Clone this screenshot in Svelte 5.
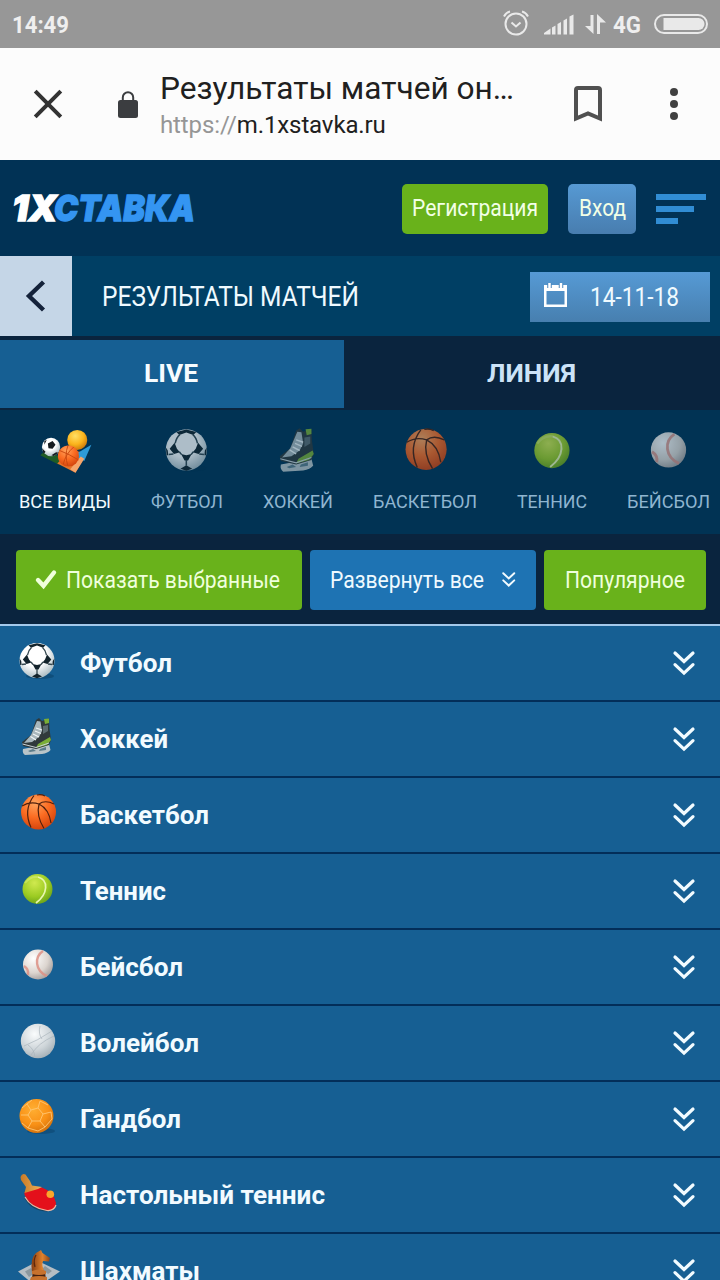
<script>
    const sports = [
        { id: 'all', label: 'ВСЕ ВИДЫ', width: 92 },
        { id: 'football', label: 'ФУТБОЛ', width: 72 },
        { id: 'hockey', label: 'ХОККЕЙ', width: 70 },
        { id: 'basketball', label: 'БАСКЕТБОЛ', width: 104 },
        { id: 'tennis', label: 'ТЕННИС', width: 70 },
        { id: 'baseball', label: 'БЕЙСБОЛ', width: 83 }
    ];

    const rows = [
        { id: 'football', label: 'Футбол', width: 92 },
        { id: 'hockey', label: 'Хоккей', width: 88 },
        { id: 'basketball', label: 'Баскетбол', width: 129 },
        { id: 'tennis', label: 'Теннис', width: 86 },
        { id: 'baseball', label: 'Бейсбол', width: 103 },
        { id: 'volleyball', label: 'Волейбол', width: 119 },
        { id: 'handball', label: 'Гандбол', width: 101 },
        { id: 'pingpong', label: 'Настольный теннис', width: 245 },
        { id: 'chess', label: 'Шахматы', width: 120 }
    ];

    let activeSport = $state('all');
    let activeTab = $state('live');
</script>

<!-- condensed label, squeezed to a given width -->
{#snippet label(text, size, width, weight = 400)}
    <svg class="label" width={width} height={size * 1.2}>
        <text x="0" y={size * 0.955} font-size={size} font-weight={weight} textLength={width} lengthAdjust="spacingAndGlyphs">{text}</text>
    </svg>
{/snippet}

{#snippet chevrons(size)}
    <svg width={size} height={size * 1.1} viewBox="0 0 22 24.2" fill="none" stroke="#f2fbff" stroke-width="3.2" stroke-linecap="round">
        <path d="M2 2 L11 10.5 L20 2 M2 13.6 L11 22.1 L20 13.6" />
    </svg>
{/snippet}

{#snippet sportIcon(id, size)}
    <svg class="sport-icon" width={size} height={size} viewBox="0 0 40 40">
        {#if id === 'all'}
            <path d="M-1.5 24 L5 18 L20 30 L14 32 Z" fill="#1f5c25" />
            <path d="M13 31 L24 20 L38 22 L28.5 39 Z" fill="#e5742a" />
            <path d="M27 24 L42 15 L36 29 Z" fill="#2e9bd8" />
            <path d="M28.5 39 L36 27 L33 25 L24 36 Z" fill="#f6a56a" />
            <circle cx="7.7" cy="17" r="7.8" fill="url(#white-ball)" />
            <path d="M5 14 L9 12 L11.5 15 L9 18.5 L5.5 18 Z M0 18 L3 21 L1.5 23 Z M8 24 L12 21.5 L14 22 L10 24.6 Z M2 12 L4 11 L2 15 Z" fill="#161c20" />
            <circle cx="30" cy="11" r="8.5" fill="url(#yellow-ball)" />
            <circle cx="22.5" cy="24.7" r="9" fill="url(#orange-ball)" />
            <path d="M15 20 Q23 23 31 28 M22 16 Q19 24 22 33 M27 17 Q20 23 18 32" fill="none" stroke="#c9480f" stroke-width=".8" />
        {:else if id === 'football'}
            <ellipse cx="22" cy="35" rx="14" ry="3" fill="#04304f" opacity=".35" />
            <circle cx="19" cy="19.5" r="17.5" fill="url(#white-ball)" />
            <path d="M9 13.5 L11 18.5 L13.5 21.5 L8.5 23 L4.8 18.5 Z M29 13.5 L27 18.5 L24.5 21.5 L29.5 23 L33.3 18.5 Z M14.5 23 L19 24 L23.5 23 L20.5 28.5 L17.5 28.5 Z M10.5 4.2 L19 2.2 L27.5 4.2 L25 6.8 L19 4.6 L13 6.8 Z M1.6 17.5 L3.2 20 L3.6 24 L2.2 24 Z M36.4 17.5 L34.8 20 L34.4 24 L35.8 24 Z M14 35.5 L19 32.5 L24 35.5 L19 37.2 Z" fill="#13232b" />
            <path d="M9.5 14 Q10.5 9 13.5 6.5 M28.5 14 Q27.5 9 24.5 6.5 M13 21 L15 23.5 M25 21 L23 23.5 M19 28 V33 M8 23 L4 23.5 M30 23 L34 23.5" fill="none" stroke="#34474f" stroke-width="1.3" />
        {:else if id === 'hockey'}
            <path d="M5 32 L31 27 L32.5 33 Q30 36 24 37 L7 38 Q4 36 5 32 Z" fill="#b9c4c8" />
            <path d="M10 34 L15 32 L18 34 L12 35 Z M22 32 L28 30 L28 33 L21 34 Z" fill="#5b7c8a" />
            <path d="M18 3 L21 1 L24 4 L31 1.5 L31.5 12 L33 23 L31 28 L18 32 L5 29 L4 25 L13 18 Z" fill="#30393b" />
            <path d="M19 4 L22.5 4.5 L24 14 L21 20 L14 25 L6 26 L13 18 Z" fill="#a9b7bc" />
            <path d="M26 2 L31 1.5 L31 6 L27 7 Z M32 20 L33 23 L29 28 L18 31 L20 27 Z" fill="#7aae36" />
            <path d="M18 11 L24 13 M17 14 L23 16.5 M15 17 L21 20 M12.5 19.5 L18 23" stroke="#f0f5f6" stroke-width="1.2" />
            <path d="M25 9 L30 8 L30 14 L25 17 Z" fill="#5d6c70" />
            <path d="M4.5 27 L18 30.5 L31 26" fill="none" stroke="#c9d2d5" stroke-width="1" />
        {:else if id === 'basketball'}
            <circle cx="20.5" cy="19" r="17.5" fill="url(#orange-ball)" />
            <path d="M4 13 Q12 8 21 11 Q31 16 33 30 M16 2.5 Q5 17 13 34.5 M21 11 Q18 23 26 35.5 M21 11 Q27 6.5 36 11 M19 2 Q23 1 27 3" fill="none" stroke="#50200d" stroke-width="1.2" />
        {:else if id === 'tennis'}
            <circle cx="19.5" cy="20" r="15" fill="url(#green-ball)" />
            <path d="M20 8 C31 11 30 25 18 34" fill="none" stroke="#e8f6b0" stroke-width="1.7" />
            <path d="M7 14 Q12 7 20 8" fill="none" stroke="#d4ec75" stroke-width="2" opacity=".6" />
        {:else if id === 'baseball'}
            <circle cx="20" cy="19.5" r="15" fill="url(#base-ball)" />
            <path d="M25 6 C16 12 17 26 29 31 M6 21 Q11 24 10 30" fill="none" stroke="#dc8f84" stroke-width="2.4" opacity=".85" />
        {:else if id === 'volleyball'}
            <circle cx="20" cy="20" r="17.2" fill="url(#volley-ball)" />
            <path d="M6 25 Q19 20 34 10 M13 34 Q20 22 36 15 M22 5 Q20 13 24 18 M10 24 Q16 28 17 36" fill="none" stroke="#aab5bb" stroke-width=".7" />
        {:else if id === 'handball'}
            <ellipse cx="23" cy="34" rx="14" ry="3" fill="#04304f" opacity=".3" />
            <circle cx="18.5" cy="19" r="17" fill="url(#hand-ball)" />
            <path d="M13 13 L20 11 L25 17 L22 24 L14 24 L10 18 Z M13 13 L9 7 M20 11 L22 4 M25 17 L33 15 M22 24 L27 30 M14 24 L10 31 M10 18 L3 18 M9 7 L14 3 M9 7 L4 11 M22 4 L30 8 M33 15 L34 22 L27 30 L20 34 L10 31 L4 26" fill="none" stroke="#ffc673" stroke-width=".9" />
        {:else if id === 'pingpong'}
            <path d="M6 24 Q12 38 30 38.5 L20 31 Z" fill="#163a50" opacity=".7" />
            <path d="M6.5 19 Q9 15 24 14.5 Q36 19 38 30 Q38 37 29 37.5 Q13 35 6.5 22 Z" fill="#e4101b" />
            <path d="M7 24 Q13 35 29 37.5 Q36 38 38 32" fill="none" stroke="#f2b8a0" stroke-width="1.2" />
            <path d="M2.5 4 Q4 0 7.5 1.5 L12 8 L14 12.5 L24 14 L20 16 L6.5 20 L8 14 L3 7 Z" fill="url(#wood)" />
            <circle cx="32.3" cy="21.2" r="3.8" fill="#fba62b" />
        {:else if id === 'chess'}
            <path d="M0 22.5 L20 12 L42 22.5 L24 35 L15 35 Z" fill="#b5bdc3" />
            <path d="M7 22.5 L13 19 L17 24 L11 28 Z M27 17 L34 22 L30 25 L24 20 Z" fill="#8b979e" />
            <path d="M14 23 Q12 9 18 4 L23 1 L24.5 4 L32 9 L31 12.5 L25 12 Q23 17 27 23 Z" fill="url(#knight)" />
            <path d="M15 23 H27 L29 40 H12 Z" fill="#46210f" />
            <path d="M14 22 Q21 19 28 22 V25 Q21 27 14 25 Z M13 28 Q21 26 29 28 L29 31 H12 Z" fill="#c7722e" />
            <path d="M18 6 Q15 11 17 18" fill="none" stroke="#5e280d" stroke-width="1.3" />
        {/if}
    </svg>
{/snippet}

<div class="screen">
    <div class="status">
        {@render label('14:49', 24, 57, 700)}
        <div class="status-icons">
            <svg class="alarm" width="26" height="26" viewBox="0 0 26 26" fill="none" stroke="#e9e9e9" stroke-width="2">
                <circle cx="13" cy="14" r="10.5" />
                <path d="M8.5 12.5 L13 16.5 L17.5 12.5 M1 6.5 Q3 2.5 7 1.5 M25 6.5 Q23 2.5 19 1.5" />
            </svg>
            <svg class="signal" width="30" height="21" viewBox="0 0 30 21" fill="#e9e9e9">
                <path d="M0 20.5 V19 L6.5 14.5 V20.5 Z M8 13.5 L11.5 11.5 V20.5 H8 Z M13.5 10 L17 8 V20.5 H13.5 Z M19.5 6.5 L23 4.5 V20.5 H19.5 Z M25.5 2.5 L29.5 .5 V20.5 H25.5 Z" />
            </svg>
            <svg class="data" width="21" height="21" viewBox="0 0 21 21" fill="#e9e9e9">
                <path d="M5.5 1 H8.5 V20 L0 12 H5.5 Z M12 20 V0 L21 8.5 H15 V20 Z" />
            </svg>
            {@render label('4G', 24, 28, 700)}
            <svg class="battery" width="54" height="20" viewBox="0 0 54 20">
                <rect x="1" y="1" width="52" height="18" rx="9" fill="none" stroke="#e9e9e9" stroke-width="2" />
                <path d="M9.5 4 H44.5 A6 6 0 0 1 44.5 16 H9.5 Z" fill="#e9e9e9" />
            </svg>
        </div>
    </div>

    <div class="browser">
        <svg class="close" width="28" height="28" viewBox="0 0 28 28" stroke="#333" stroke-width="4">
            <path d="M1.2 1.2 L26.8 26.8 M26.8 1.2 L1.2 26.8" />
        </svg>
        <svg class="lock" width="20" height="27" viewBox="0 0 20 27">
            <path d="M4.8 10 V6.5 A5.2 5.2 0 0 1 15.2 6.5 V10" fill="none" stroke="#3b3d40" stroke-width="2" />
            <rect y="9" width="20" height="18" rx="2.5" fill="#3b3d40" />
        </svg>
        <div class="address">
            {@render label('Результаты матчей он…', 32, 354)}
            <div class="url"><span>https://</span>m.1xstavka.ru</div>
        </div>
        <svg class="bookmark" width="28" height="36" viewBox="0 0 28 36">
            <path d="M2 32.5 V4 Q2 2 4 2 H24 Q26 2 26 4 V32.5 L14 27.5 Z" fill="none" stroke="#505050" stroke-width="4" />
        </svg>
        <svg class="dots" width="8" height="34" viewBox="0 0 8 34" fill="#404040">
            <circle cx="4" cy="5" r="4" />
            <circle cx="4" cy="17" r="4" />
            <circle cx="4" cy="29" r="4" />
        </svg>
    </div>

    <header>
        <svg class="logo" width="184" height="30" viewBox="0 0 184 30">
            <defs>
                <radialGradient id="white-ball" cx=".42" cy=".32" r=".7">
                    <stop offset=".5" stop-color="#fff" /><stop offset="1" stop-color="#a9bac1" />
                </radialGradient>
                <radialGradient id="yellow-ball" cx=".4" cy=".3" r=".7">
                    <stop offset="0" stop-color="#ffdf65" /><stop offset=".6" stop-color="#fbb41c" /><stop offset="1" stop-color="#cf7d0d" />
                </radialGradient>
                <radialGradient id="orange-ball" cx=".4" cy=".25" r=".8">
                    <stop offset="0" stop-color="#ffa35c" /><stop offset=".5" stop-color="#fb6c22" /><stop offset="1" stop-color="#d0400b" />
                </radialGradient>
                <radialGradient id="green-ball" cx=".4" cy=".3" r=".75">
                    <stop offset="0" stop-color="#d0e94f" /><stop offset=".6" stop-color="#9ccb22" /><stop offset="1" stop-color="#68a018" />
                </radialGradient>
                <radialGradient id="base-ball" cx=".35" cy=".3" r=".8">
                    <stop offset="0" stop-color="#fff" /><stop offset=".6" stop-color="#dcd5cf" /><stop offset="1" stop-color="#9c9696" />
                </radialGradient>
                <radialGradient id="volley-ball" cx=".4" cy=".3" r=".75">
                    <stop offset="0" stop-color="#fafcfd" /><stop offset=".6" stop-color="#ced5d9" /><stop offset="1" stop-color="#a2adb4" />
                </radialGradient>
                <radialGradient id="hand-ball" cx=".4" cy=".3" r=".75">
                    <stop offset="0" stop-color="#ffae32" /><stop offset=".6" stop-color="#f99116" /><stop offset="1" stop-color="#d06f0c" />
                </radialGradient>
                <linearGradient id="wood">
                    <stop offset="0" stop-color="#c97a25" /><stop offset="1" stop-color="#f0b25a" />
                </linearGradient>
                <linearGradient id="knight">
                    <stop offset="0" stop-color="#893e11" /><stop offset=".6" stop-color="#e0822d" /><stop offset="1" stop-color="#8d4519" />
                </linearGradient>
            </defs>
            <text x="-1" y="26.8" textLength="45" lengthAdjust="spacingAndGlyphs" fill="#fff" stroke="#fff">1X</text>
            <text x="41" y="26.8" textLength="141" lengthAdjust="spacingAndGlyphs" fill="#3495f2" stroke="#3495f2">СТАВКА</text>
        </svg>
        <button class="register">{@render label('Регистрация', 24, 126)}</button>
        <button class="login">{@render label('Вход', 24, 47)}</button>
        <div class="menu"><i></i><i></i><i></i></div>
    </header>

    <div class="title">
        <button class="back" aria-label="Назад">
            <svg width="20" height="32" viewBox="0 0 20 32" fill="none" stroke="#14223a" stroke-width="4.4">
                <path d="M17.5 2 L3 16 L17.5 30" />
            </svg>
        </button>
        <h1>{@render label('РЕЗУЛЬТАТЫ МАТЧЕЙ', 27, 257)}</h1>
        <div class="date">
            <svg width="23" height="24" viewBox="0 0 23 24">
                <path d="M0 2 H23 V24 H0 Z M2.5 8 V21.5 H20.5 V8 Z" fill="#fff" fill-rule="evenodd" />
                <path d="M5.5 0 V5 M17 0 V5" stroke="#4b87bd" stroke-width="4.5" />
                <path d="M5.5 0 V5 M17 0 V5" stroke="#fff" stroke-width="2.5" />
            </svg>
            {@render label('14-11-18', 26, 89)}
        </div>
    </div>

    <div class="tabs">
        <button class:active={activeTab === 'live'} onclick={() => (activeTab = 'live')}>{@render label('LIVE', 26.5, 54, 700)}</button>
        <button class:active={activeTab === 'line'} onclick={() => (activeTab = 'line')}>{@render label('ЛИНИЯ', 26.5, 89, 700)}</button>
    </div>

    <nav>
        {#each sports as sport}
            <button class:active={activeSport === sport.id} onclick={() => (activeSport = sport.id)}>
                {@render sportIcon(sport.id, 47)}
                {@render label(sport.label, 19, sport.width)}
            </button>
        {/each}
    </nav>

    <div class="toolbar">
        <button class="selected">
            <svg width="20" height="19" viewBox="0 0 20 19" fill="none" stroke="#efffdc" stroke-width="4.4" stroke-linecap="round">
                <path d="M2 10 L7.5 15.8 L18 2.5" />
            </svg>
            {@render label('Показать выбранные', 24, 214)}
        </button>
        <button class="expand">
            {@render label('Развернуть все', 24, 154)}
            {@render chevrons(13.5)}
        </button>
        <button class="popular">{@render label('Популярное', 24, 120)}</button>
    </div>

    <ul>
        {#each rows as row}
            <li>
                {@render sportIcon(row.id, 40)}
                {@render label(row.label, 25.5, row.width, 700)}
                <span class="arrow">{@render chevrons(22)}</span>
            </li>
        {/each}
    </ul>
</div>

<style>
    :global(body) {
        margin: 0;
        overflow: hidden;
    }

    .screen {
        width: 720px;
        height: 1280px;
        overflow: hidden;
        background: #0a243e;
        font-family: Roboto, sans-serif;
    }

    button {
        display: flex;
        align-items: center;
        justify-content: center;
        box-sizing: border-box;
        padding: 0;
        border: 0;
        background: none;
        color: inherit;
        font: inherit;
    }

    svg {
        display: block;
        flex: none;
        overflow: visible;
    }

    .label {
        fill: currentColor;
    }

    .status {
        display: flex;
        align-items: center;
        justify-content: space-between;
        box-sizing: border-box;
        height: 48px;
        padding: 1px 12px 0 12px;
        background: #979797;
        color: #efefef;
    }

    .status-icons {
        display: flex;
        align-items: center;
    }

    .alarm {
        margin: 0 15px 3px 0;
    }

    .signal {
        margin-right: 11px;
    }

    .data {
        margin-right: 7px;
    }

    .battery {
        margin: 0 0 1px 13px;
    }

    .browser {
        display: flex;
        align-items: center;
        height: 112px;
        background: #fcfcfc;
        color: #202020;
    }

    .close {
        margin-left: 34px;
    }

    .lock {
        margin-left: 56px;
    }

    .address {
        width: 354px;
        margin-left: 22px;
        padding-top: 1px;
    }

    .url {
        margin-top: 2px;
        font-size: 24px;
        line-height: 32px;
        letter-spacing: -0.12px;
        white-space: nowrap;
    }

    .url span {
        color: #969696;
    }

    .bookmark {
        margin-left: 60px;
    }

    .dots {
        margin-left: 68px;
    }

    header {
        display: flex;
        align-items: center;
        box-sizing: border-box;
        height: 96px;
        padding: 2px 14px 0 13px;
        background: #013255;
    }

    .logo {
        margin-right: auto;
        font: italic 900 36px Inter, sans-serif;
        stroke-width: 1.3px;
    }

    .register,
    .login {
        height: 50px;
        padding-bottom: 3px;
        border-radius: 5px;
        color: #f2ffe6;
    }

    .register {
        width: 146px;
        background: #69b21b;
    }

    .login {
        width: 68px;
        margin-left: 20px;
        background: linear-gradient(#5699d3, #487daf);
    }

    .menu {
        display: flex;
        flex-direction: column;
        gap: 6px;
        margin-left: 20px;
        width: 50px;
    }

    .menu i {
        height: 6px;
        background: #318dd4;
    }

    .menu i:nth-child(2) {
        width: 38px;
    }

    .menu i:nth-child(3) {
        width: 22px;
    }

    .title {
        display: flex;
        align-items: center;
        height: 80px;
        background: #003f64;
        color: #effaff;
    }

    .back {
        width: 72px;
        height: 80px;
        background: #c5d6e7;
    }

    h1 {
        margin: 0 auto 0 30px;
    }

    .date {
        display: flex;
        align-items: center;
        gap: 23px;
        box-sizing: border-box;
        width: 180px;
        height: 50px;
        margin: 2px 10px 0 0;
        padding-left: 14px;
        background: linear-gradient(#569ad5, #477faf);
    }

    .date svg:first-child {
        margin-bottom: 5px;
    }

    .tabs {
        display: flex;
        height: 74px;
        color: #cce3f8;
    }

    .tabs button {
        width: 376px;
        height: 68px;
        margin-top: 4px;
        padding: 0 1px 3px 0;
    }

    .tabs button:first-child {
        width: 344px;
        padding-right: 3px;
    }

    .tabs button.active {
        background: #165f93;
        color: #f6fcff;
    }

    nav {
        display: flex;
        gap: 40px;
        box-sizing: border-box;
        height: 124px;
        padding: 17px 0 0 19px;
        background: #013354;
        color: #8fb5d0;
    }

    nav button {
        flex-direction: column;
        justify-content: flex-start;
        gap: 16px;
    }

    nav button .sport-icon {
        opacity: 0.68;
    }

    nav button.active {
        color: #f1fbff;
    }

    nav button.active .sport-icon {
        opacity: 1;
    }

    .toolbar {
        display: flex;
        align-items: center;
        gap: 8px;
        box-sizing: border-box;
        height: 90px;
        padding: 2px 14px 0 16px;
    }

    .toolbar button {
        height: 60px;
        padding: 0 1px 2px 0;
        border-radius: 4px;
        background: #69b21b;
        color: #efffdc;
    }

    .toolbar .selected {
        gap: 10px;
        width: 286px;
        padding-right: 2px;
    }

    .toolbar .expand {
        gap: 18px;
        width: 226px;
        background: #1e73b3;
        color: #effaff;
    }

    .toolbar .popular {
        width: 162px;
    }

    ul {
        margin: 0;
        padding: 0;
        border-top: 2px solid #a4c9eb;
        list-style: none;
    }

    li {
        display: flex;
        align-items: center;
        box-sizing: border-box;
        height: 76px;
        padding: 0 25px 0 18px;
        border-bottom: 2px solid #032e59;
        background: #165f93;
        color: #f2fbff;
    }

    li .sport-icon {
        margin: 0 22px 4px 0;
    }

    .arrow {
        margin-left: auto;
    }
</style>
